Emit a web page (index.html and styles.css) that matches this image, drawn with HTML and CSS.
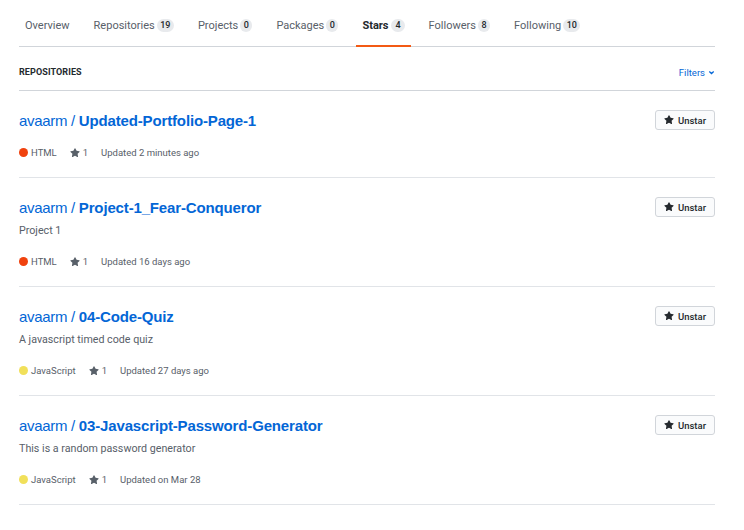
FILE: index.html
```html
<!DOCTYPE html>
<html>
<head>
<meta charset="utf-8">
<link rel="stylesheet" href="styles.css">
</head>
<body>
<div class="page">
  <nav class="tabs">
    <a class="tab">Overview</a>
    <a class="tab">Repositories <span class="counter">19</span></a>
    <a class="tab">Projects <span class="counter">0</span></a>
    <a class="tab">Packages <span class="counter">0</span></a>
    <a class="tab active">Stars <span class="counter">4</span></a>
    <a class="tab">Followers <span class="counter">8</span></a>
    <a class="tab">Following <span class="counter">10</span></a>
  </nav>

  <div class="list-head">
    <h2 class="list-title">REPOSITORIES</h2>
    <a class="filters">Filters <svg class="chev" viewBox="0 0 8 8" width="7" height="7"><polyline points="1.5,2.8 4,5.2 6.5,2.8" fill="none" stroke="#0366d6" stroke-width="1.4"/></svg></a>
  </div>

  <div class="repo">
    <div class="repo-main">
      <h3 class="repo-name"><a><span class="owner">avaarm / </span><b>Updated-Portfolio-Page-1</b></a></h3>
      <div class="meta">
        <span class="lang"><span class="dot html"></span>HTML</span>
        <span class="stars"><svg class="star" viewBox="0 0 16 16"><path d="M8 .25a.75.75 0 01.673.418l1.882 3.815 4.21.612a.75.75 0 01.416 1.279l-3.046 2.970.719 4.192a.75.75 0 01-1.088.791L8 12.347l-3.766 1.98a.75.75 0 01-1.088-.79l.72-4.194L.818 6.374a.75.75 0 01.416-1.28l4.21-.611L7.327.668A.75.75 0 018 .25z"/></svg>1</span>
        <span>Updated 2 minutes ago</span>
      </div>
    </div>
    <button class="btn"><svg class="star" viewBox="0 0 16 16"><path d="M8 .25a.75.75 0 01.673.418l1.882 3.815 4.21.612a.75.75 0 01.416 1.279l-3.046 2.970.719 4.192a.75.75 0 01-1.088.791L8 12.347l-3.766 1.98a.75.75 0 01-1.088-.79l.72-4.194L.818 6.374a.75.75 0 01.416-1.28l4.21-.611L7.327.668A.75.75 0 018 .25z"/></svg>Unstar</button>
  </div>

  <div class="repo">
    <div class="repo-main">
      <h3 class="repo-name"><a><span class="owner">avaarm / </span><b>Project-1_Fear-Conqueror</b></a></h3>
      <p class="desc">Project 1</p>
      <div class="meta">
        <span class="lang"><span class="dot html"></span>HTML</span>
        <span class="stars"><svg class="star" viewBox="0 0 16 16"><path d="M8 .25a.75.75 0 01.673.418l1.882 3.815 4.21.612a.75.75 0 01.416 1.279l-3.046 2.970.719 4.192a.75.75 0 01-1.088.791L8 12.347l-3.766 1.98a.75.75 0 01-1.088-.79l.72-4.194L.818 6.374a.75.75 0 01.416-1.28l4.21-.611L7.327.668A.75.75 0 018 .25z"/></svg>1</span>
        <span>Updated 16 days ago</span>
      </div>
    </div>
    <button class="btn"><svg class="star" viewBox="0 0 16 16"><path d="M8 .25a.75.75 0 01.673.418l1.882 3.815 4.21.612a.75.75 0 01.416 1.279l-3.046 2.970.719 4.192a.75.75 0 01-1.088.791L8 12.347l-3.766 1.98a.75.75 0 01-1.088-.79l.72-4.194L.818 6.374a.75.75 0 01.416-1.28l4.21-.611L7.327.668A.75.75 0 018 .25z"/></svg>Unstar</button>
  </div>

  <div class="repo">
    <div class="repo-main">
      <h3 class="repo-name"><a><span class="owner">avaarm / </span><b>04-Code-Quiz</b></a></h3>
      <p class="desc">A javascript timed code quiz</p>
      <div class="meta">
        <span class="lang"><span class="dot js"></span>JavaScript</span>
        <span class="stars"><svg class="star" viewBox="0 0 16 16"><path d="M8 .25a.75.75 0 01.673.418l1.882 3.815 4.21.612a.75.75 0 01.416 1.279l-3.046 2.970.719 4.192a.75.75 0 01-1.088.791L8 12.347l-3.766 1.98a.75.75 0 01-1.088-.79l.72-4.194L.818 6.374a.75.75 0 01.416-1.28l4.21-.611L7.327.668A.75.75 0 018 .25z"/></svg>1</span>
        <span>Updated 27 days ago</span>
      </div>
    </div>
    <button class="btn"><svg class="star" viewBox="0 0 16 16"><path d="M8 .25a.75.75 0 01.673.418l1.882 3.815 4.21.612a.75.75 0 01.416 1.279l-3.046 2.970.719 4.192a.75.75 0 01-1.088.791L8 12.347l-3.766 1.98a.75.75 0 01-1.088-.79l.72-4.194L.818 6.374a.75.75 0 01.416-1.28l4.21-.611L7.327.668A.75.75 0 018 .25z"/></svg>Unstar</button>
  </div>

  <div class="repo">
    <div class="repo-main">
      <h3 class="repo-name"><a><span class="owner">avaarm / </span><b>03-Javascript-Password-Generator</b></a></h3>
      <p class="desc">This is a random password generator</p>
      <div class="meta">
        <span class="lang"><span class="dot js"></span>JavaScript</span>
        <span class="stars"><svg class="star" viewBox="0 0 16 16"><path d="M8 .25a.75.75 0 01.673.418l1.882 3.815 4.21.612a.75.75 0 01.416 1.279l-3.046 2.970.719 4.192a.75.75 0 01-1.088.791L8 12.347l-3.766 1.98a.75.75 0 01-1.088-.79l.72-4.194L.818 6.374a.75.75 0 01.416-1.28l4.21-.611L7.327.668A.75.75 0 018 .25z"/></svg>1</span>
        <span>Updated on Mar 28</span>
      </div>
    </div>
    <button class="btn"><svg class="star" viewBox="0 0 16 16"><path d="M8 .25a.75.75 0 01.673.418l1.882 3.815 4.21.612a.75.75 0 01.416 1.279l-3.046 2.970.719 4.192a.75.75 0 01-1.088.791L8 12.347l-3.766 1.98a.75.75 0 01-1.088-.79l.72-4.194L.818 6.374a.75.75 0 01.416-1.28l4.21-.611L7.327.668A.75.75 0 018 .25z"/></svg>Unstar</button>
  </div>
</div>
</body>
</html>
```

FILE: styles.css
```css
* { box-sizing: border-box; }
html, body { margin: 0; padding: 0; background: #fff; }
body {
  font-family: Roboto, "Liberation Sans", Arial, sans-serif;
  color: #24292e;
}
.page {
  width: 696px;
  margin-left: 19px;
}
.tabs {
  display: flex;
  height: 47px;
  border-bottom: 1px solid #d1d5da;
}
.tab {
  display: flex;
  align-items: center;
  padding: 6px 6px 0;
  margin-right: 12px;
  font-size: 11px;
  color: #586069;
  border-bottom: 2px solid transparent;
  margin-bottom: -1px;
}
.tab.active {
  color: #24292e;
  font-weight: 700;
  border-bottom-color: #f35a14;
}
.counter {
  display: inline-block;
  margin-left: 2px;
  padding: 0 3.5px;
  font-size: 9px;
  font-weight: 500;
  line-height: 13px;
  background: #e8eaed;
  border-radius: 7px;
  color: #24292e;
}
.tab.active .counter { margin-left: 3px; padding: 0 4px; }
.list-head {
  display: flex;
  justify-content: space-between;
  align-items: center;
  height: 44px;
  border-bottom: 1px solid #d1d5da;
  padding-top: 7px;
}
.list-title {
  margin: 0;
  font-size: 9px;
  font-weight: 700;
  letter-spacing: 0.1px;
}
.filters {
  font-size: 9.5px;
  color: #0366d6;
  display: flex;
  align-items: center;
  gap: 3px;
}
.repo {
  display: flex;
  justify-content: space-between;
  align-items: flex-start;
  padding: 18px 0 17px;
  border-bottom: 1px solid #e1e4e8;
}
.repo-name {
  margin: 0;
  font-family: "Liberation Sans", Arial, sans-serif;
  font-size: 15px;
  font-weight: normal;
  line-height: 24px;
}
.repo-name a { color: #0366d6; }
.repo-name .owner { letter-spacing: -0.3px; }
.repo-name b { font-weight: 700; letter-spacing: -0.15px; }
.desc {
  margin: 3px 0 0;
  font-size: 10.7px;
  line-height: 16px;
  color: #586069;
}
.meta {
  display: flex;
  align-items: center;
  margin-top: 12px;
  font-size: 9.5px;
  line-height: 15px;
  color: #586069;
}
.desc + .meta { margin-top: 15px; }
.meta > span { margin-right: 13px; display: flex; align-items: center; }
.dot {
  width: 9px;
  height: 9px;
  border-radius: 50%;
  margin-right: 3px;
}
.dot.html { background: #f0420e; }
.dot.js { background: #f1e05a; }
.star { width: 10px; height: 10px; fill: #586069; margin-right: 3px; }
.btn {
  width: 60px;
  height: 20px;
  margin-top: 1px;
  display: flex;
  align-items: center;
  justify-content: center;
  font-family: inherit;
  font-size: 9.5px;
  font-weight: 500;
  color: #24292e;
  background: #fafbfc;
  border: 1px solid #d1d5da;
  border-radius: 3px;
  padding: 0;
}
.btn .star { fill: #24292e; margin-right: 4px; }
```
